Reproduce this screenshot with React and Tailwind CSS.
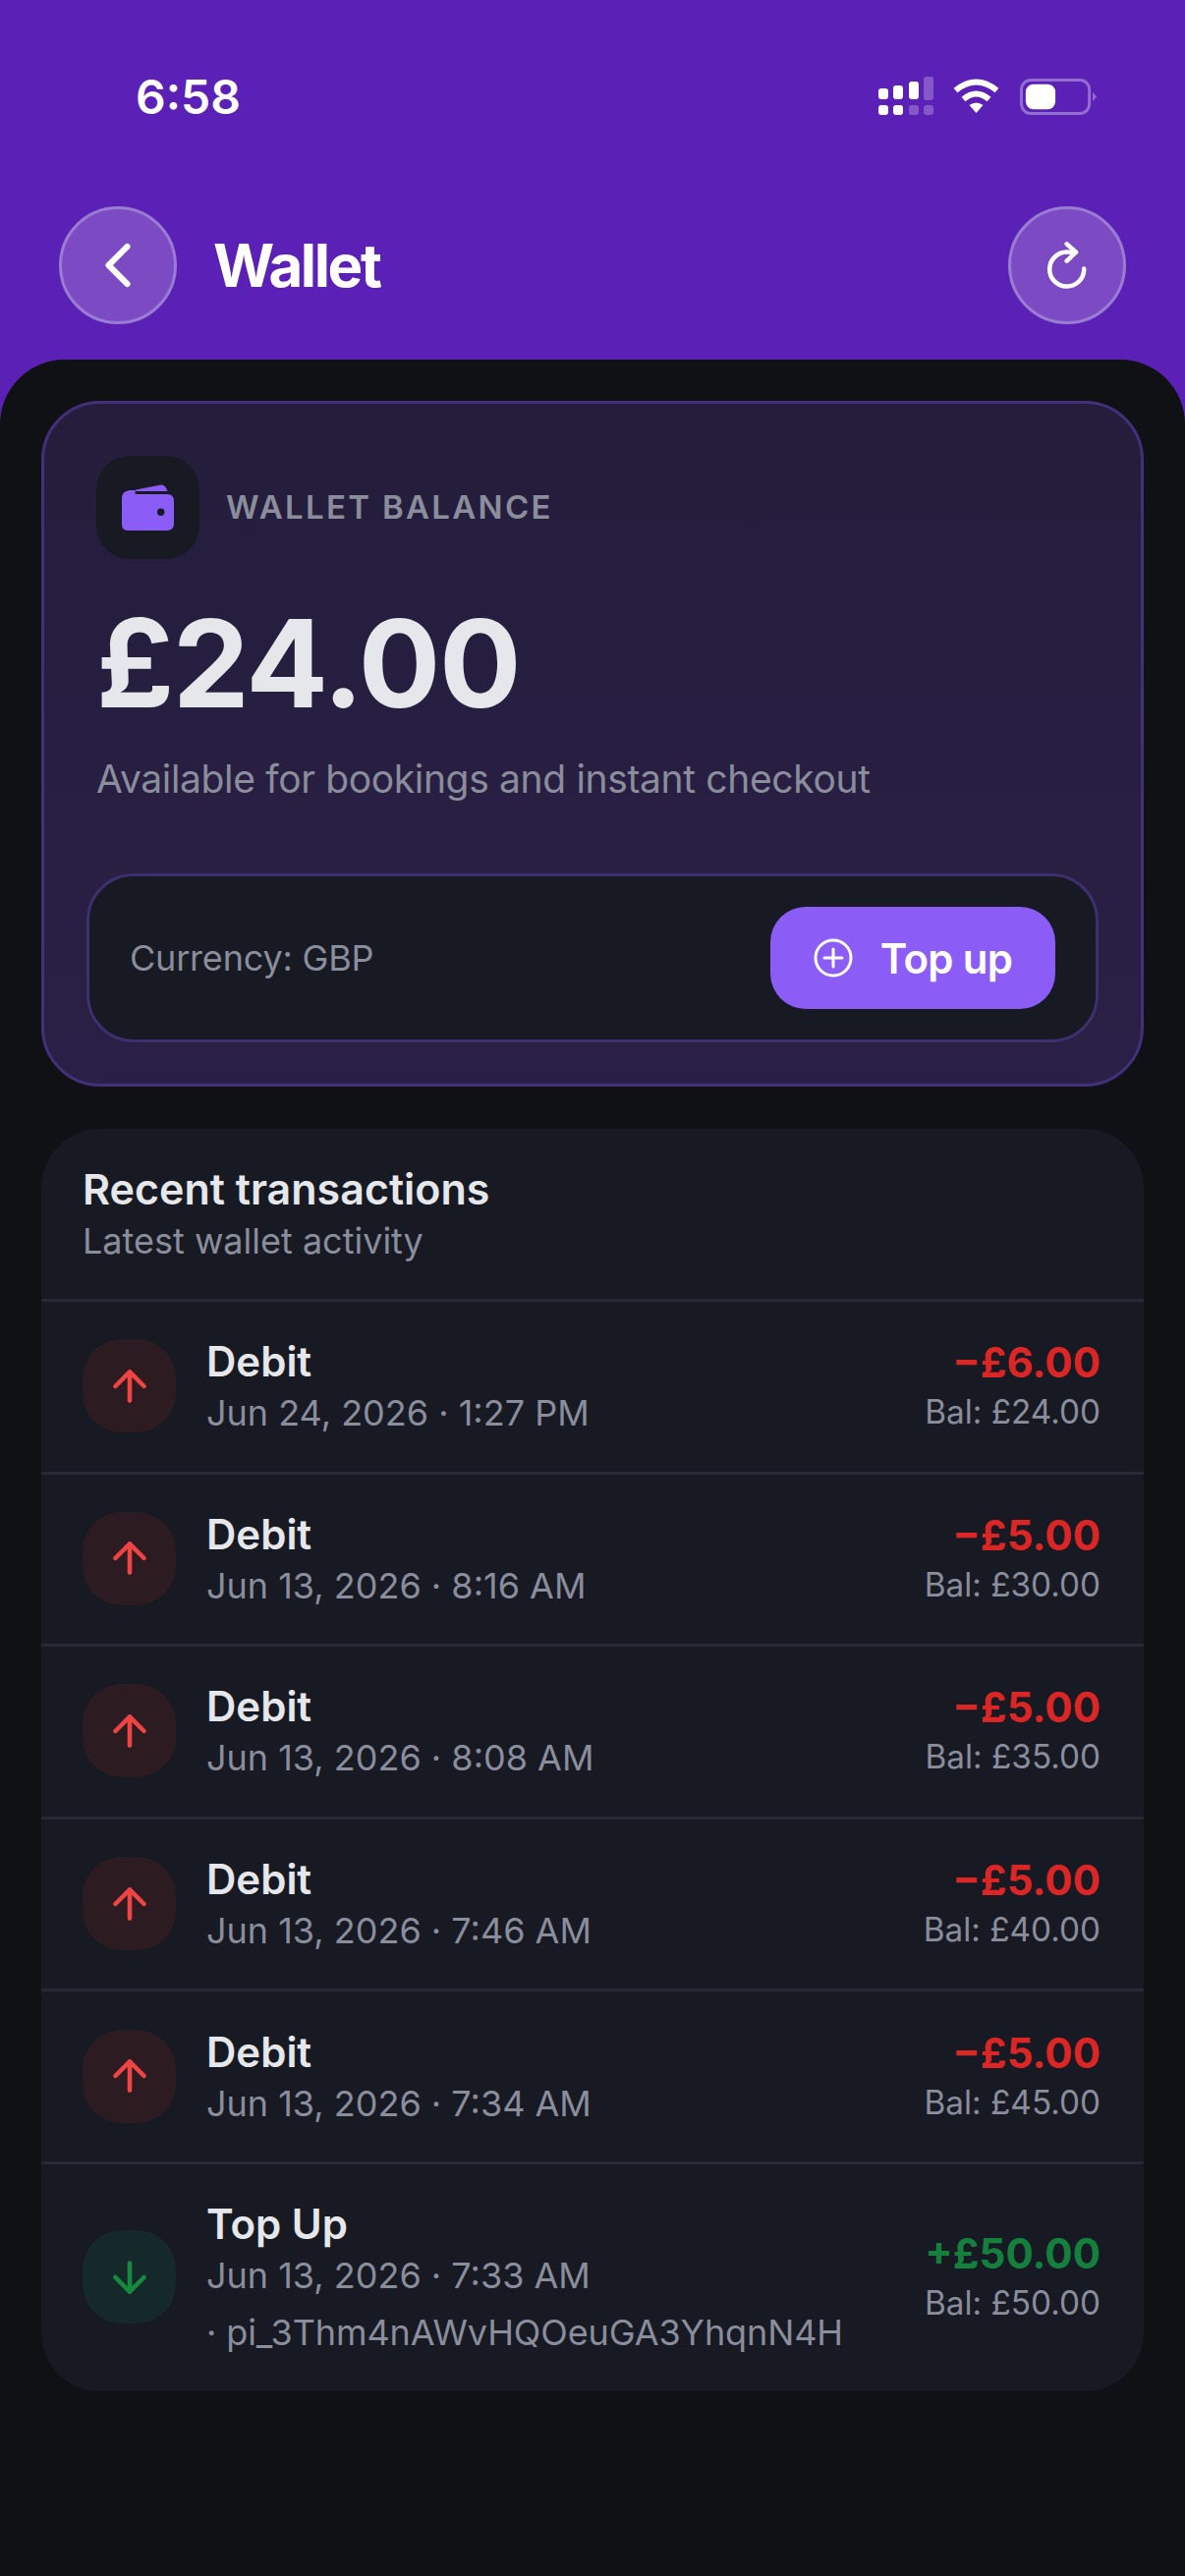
import { ArrowDown, ArrowUp, ChevronLeft } from 'lucide-react';

const transactions = [
  { id: 1, title: 'Debit', date: 'Jun 24, 2026 · 1:27 PM', amount: '−£6.00', balance: 'Bal: £24.00' },
  { id: 2, title: 'Debit', date: 'Jun 13, 2026 · 8:16 AM', amount: '−£5.00', balance: 'Bal: £30.00' },
  { id: 3, title: 'Debit', date: 'Jun 13, 2026 · 8:08 AM', amount: '−£5.00', balance: 'Bal: £35.00' },
  { id: 4, title: 'Debit', date: 'Jun 13, 2026 · 7:46 AM', amount: '−£5.00', balance: 'Bal: £40.00' },
  { id: 5, title: 'Debit', date: 'Jun 13, 2026 · 7:34 AM', amount: '−£5.00', balance: 'Bal: £45.00' },
  {
    id: 6,
    title: 'Top Up',
    date: 'Jun 13, 2026 · 7:33 AM',
    reference: '· pi_3Thm4nAWvHQOeuGA3YhqnN4H',
    amount: '+£50.00',
    balance: 'Bal: £50.00',
    credit: true,
  },
];

const StatusIcons = () => (
  <div className="flex items-center gap-[19px]">
    <svg width="56" height="40" viewBox="0 0 56 40" fill="#fff">
      <rect x="0" y="12" width="10" height="11" rx="3" />
      <rect x="15" y="9" width="10" height="14" rx="3" />
      <rect x="31" y="5" width="10" height="18" rx="3" />
      <rect x="46" y="0" width="10" height="24" rx="3" opacity="0.25" />
      <rect x="0" y="29" width="10" height="10" rx="3" />
      <rect x="15" y="29" width="10" height="10" rx="3" />
      <rect x="31" y="29" width="10" height="10" rx="3" opacity="0.25" />
      <rect x="46" y="29" width="10" height="10" rx="3" opacity="0.25" />
    </svg>
    <svg width="49" height="36" viewBox="0 0 48 36" fill="none" stroke="#fff">
      <path d="M3 12 Q24 -5 45 12" strokeWidth="6" />
      <path d="M11 21 Q24 10 37 21" strokeWidth="6" />
      <path d="M17 27 Q24 22 31 27 L24 35 Z" fill="#fff" strokeWidth="0" />
    </svg>
    <svg width="80" height="37" viewBox="0 0 80 38" fill="none">
      <rect x="1.5" y="1.5" width="71" height="35" rx="10" stroke="#fff" strokeOpacity="0.35" strokeWidth="3" />
      <rect x="6" y="6" width="31" height="26" rx="8" fill="#fff" />
      <path d="M76 14 L80 19 L76 24 Z" fill="#fff" fillOpacity="0.35" />
    </svg>
  </div>
);

const HeaderButton = ({ children }) => (
  <button className="flex h-[120px] w-[120px] items-center justify-center rounded-full border-[3px] border-[#9a7cd3] bg-[#7c4bc3]">
    {children}
  </button>
);

const TransactionRow = ({ tx }) => (
  <div className="flex items-center justify-between border-t-[3px] border-[#262936] pb-[33.3px] pl-[42px] pr-[44px] pt-[35.3px]">
    <div className="flex items-center gap-[31px]">
      <div className={`-mt-[3px] flex h-[95px] w-[95px] items-center justify-center rounded-[40px] ${tx.credit ? 'bg-[#16292a]' : 'bg-[#2c1c22]'}`}>
        {tx.credit ? (
          <ArrowDown size={50} strokeWidth={2.2} color="#16893f" />
        ) : (
          <ArrowUp size={50} strokeWidth={2.2} color="#ef4444" />
        )}
      </div>
      <div>
        <p className="text-[42px] leading-[52px] font-semibold text-[#e5e7eb]">{tx.title}</p>
        <p className="text-[36px] leading-[52px] text-[#8a8d9b]">{tx.date}</p>
        {tx.reference && <p className="mt-[6px] text-[36px] leading-[52px] tracking-[-0.1px] text-[#8a8d9b]">{tx.reference}</p>}
      </div>
    </div>
    <div className="text-right">
      <p className={`text-[42px] leading-[50px] font-bold ${tx.credit ? 'text-[#15803d]' : 'text-[#dc2626]'}`}>{tx.amount}</p>
      <p className="text-[33.3px] leading-[50px] text-[#8a8d9b]">{tx.balance}</p>
    </div>
  </div>
);

export default function App() {
  return (
    <div className="min-h-[2622px] bg-[#5b21b6] font-['Inter',sans-serif]">
      {/* status bar */}
      <div className="flex h-[210px] items-start justify-between pl-[138px] pr-[89px] pt-[66px]">
        <span className="text-[48px] leading-[66px] font-semibold text-white">6:58</span>
        <div className="pt-[12px]">
          <StatusIcons />
        </div>
      </div>

      {/* header */}
      <div className="flex h-[156px] items-start justify-between px-[60px]">
        <div className="flex items-center gap-[37px]">
          <HeaderButton>
            <ChevronLeft size={76} strokeWidth={1.9} color="#fff" />
          </HeaderButton>
          <h1 className="text-[60px] font-bold tracking-[-2.4px] text-white">Wallet</h1>
        </div>
        <HeaderButton>
          <svg width="48" height="54" viewBox="0 0 48 54" fill="none" stroke="#fff" strokeWidth="4.5" strokeLinecap="round" strokeLinejoin="round">
            <path d="M41.2 30.5 A17.5 17.5 0 1 1 25 13.6 L33 13.7" />
            <path d="M23.7 5.3 L33 13.7 L23.7 22.7" />
          </svg>
        </HeaderButton>
      </div>

      {/* sheet */}
      <div className="min-h-[2256px] rounded-t-[66px] bg-[#0f1115] px-[42px] pt-[42px]">
        <div className="rounded-[60px] border-[3px] border-[#43307a] bg-gradient-to-b from-[#241d3b] to-[#2a2047] px-[43px] pb-[42px] pt-[53px]">
          <div className="flex items-center gap-[27px] pl-[10px]">
            <div className="flex h-[105px] w-[105px] items-center justify-center rounded-[34px] bg-[#171923]">
              <svg width="53" height="47" viewBox="0 0 53 47" fill="none">
                <path d="M14 5.5 L40 0.5 Q44 0 46.5 7 L14 7 Z" fill="#8b5cf6" />
                <path d="M8 6 Q0 7 0 14 L0 41 Q0 47 7 47 L46 47 Q53 47 53 40 L53 17 Q53 10 46 10 L14 10 Q13 8 14 6 Z" fill="#8b5cf6" />
                <circle cx="39.7" cy="28.3" r="3.7" fill="#171923" />
              </svg>
            </div>
            <span className="text-[33px] font-semibold tracking-[2.3px] text-[#8a8d9b]">WALLET BALANCE</span>
          </div>
          <p className="mt-[34px] pl-[10px] text-[124px] leading-[144px] font-bold tracking-[-1.5px] text-[#e5e7eb]">£24.00</p>
          <p className="mt-[20px] pl-[10px] text-[39px] leading-[52px] tracking-[-0.35px] text-[#8a8d9b]">Available for bookings and instant checkout</p>
          <div className="mt-[70px] flex items-center justify-between rounded-[48px] border-[3px] border-[#3e2f6e] bg-[#171923] py-[31px] pl-[41px] pr-[41px]">
            <span className="text-[36px] tracking-[-0.2px] text-[#8a8d9b]">Currency: GBP</span>
            <button className="flex h-[104px] w-[290px] items-center justify-center gap-[28px] rounded-[36px] bg-[#8b5cf6]">
              <svg width="40" height="40" viewBox="0 0 40 40" fill="none" stroke="#fff" strokeWidth="3" strokeLinecap="round">
                <circle cx="20" cy="20" r="18" />
                <path d="M20 11 V29 M11 20 H29" />
              </svg>
              <span className="text-[42px] font-semibold tracking-[-0.7px] text-white">Top up</span>
            </button>
          </div>
        </div>

        <div className="mt-[43px] overflow-hidden rounded-[60px] bg-[#171923]">
          <div className="px-[42px] pb-[33px] pt-[35px]">
            <h2 className="text-[43px] leading-[52px] font-semibold text-[#e5e7eb]">Recent transactions</h2>
            <p className="mt-[1px] text-[36px] leading-[52px] text-[#8a8d9b]">Latest wallet activity</p>
          </div>
          {transactions.map((tx) => (
            <TransactionRow key={tx.id} tx={tx} />
          ))}
        </div>
      </div>
    </div>
  );
}
